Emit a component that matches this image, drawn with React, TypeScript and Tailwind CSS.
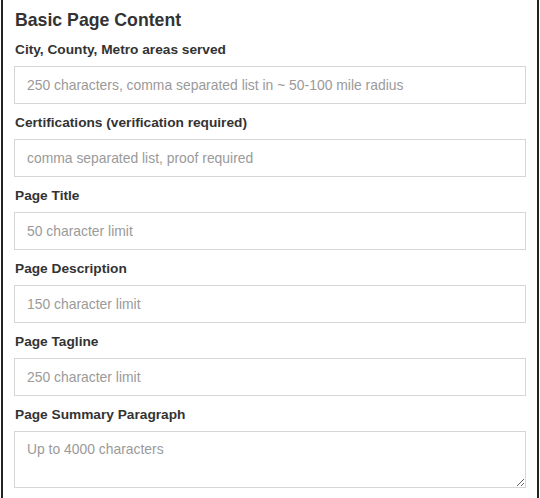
const fields = [
  { label: "City, County, Metro areas served", placeholder: "250 characters, comma separated list in ~ 50-100 mile radius" },
  { label: "Certifications (verification required)", placeholder: "comma separated list, proof required" },
  { label: "Page Title", placeholder: "50 character limit" },
  { label: "Page Description", placeholder: "150 character limit" },
  { label: "Page Tagline", placeholder: "250 character limit" },
];

export default function App() {
  return (
    <div className="min-h-screen bg-white" style={{ fontFamily: '"Liberation Sans", Arial, sans-serif' }}>
      <div className="mx-px min-h-[498px] border-x-2 border-[#222] px-[11px] pt-[10px] text-[#333]">
        <h2 className="pl-px text-[17.7px] font-bold leading-[21px]">Basic Page Content</h2>

        {fields.map((f) => (
          <div key={f.label}>
            <label className="mt-[11px] mb-[8px] block pl-px text-[13.7px] font-bold leading-[16px]">{f.label}</label>
            <input
              type="text"
              placeholder={f.placeholder}
              className="block h-[38px] w-full border border-[#d6d6d6] bg-white px-[12px] text-[13.9px] text-[#333] outline-none placeholder:text-[#9a9a9a]"
            />
          </div>
        ))}

        <div>
          <label className="mt-[11px] mb-[8px] block pl-px text-[13.7px] font-bold leading-[16px]">Page Summary Paragraph</label>
          <textarea
            placeholder="Up to 4000 characters"
            className="block h-[57px] w-full border border-[#d6d6d6] bg-white px-[12px] py-[9px] text-[13.9px] leading-[16px] text-[#333] outline-none placeholder:text-[#9a9a9a]"
          />
        </div>
      </div>
    </div>
  );
}
